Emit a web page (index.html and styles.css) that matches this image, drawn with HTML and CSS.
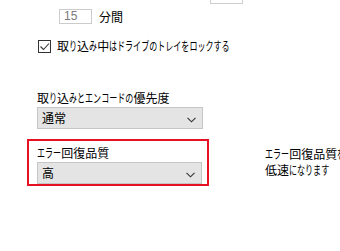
FILE: index.html
```html
<!DOCTYPE html>
<html lang="ja">
<head>
<meta charset="utf-8">
<link rel="stylesheet" href="styles.css">
</head>
<body>
<div class="page">
  <div class="top-strip"><div class="cut-box"></div></div>
  <div class="spin-row">
    <div class="spin">15</div>
    <span class="unit">分間</span>
  </div>
  <div class="check-row">
    <span class="checkbox">
      <svg width="11" height="11" viewBox="0 0 11 11"><path d="M1.5 5.5 L4.5 8.5 L10 2.5" fill="none" stroke="#333" stroke-width="1.1"/></svg>
    </span>
    <span class="text">取<span class="k n1">り</span>込<span class="k n1">み</span>中<span class="k n15">はドライブのトレイをロックする</span></span>
  </div>
  <div class="field">
    <div class="label">取<span class="k n1">り</span>込<span class="k n8">みとエンコードの</span>優先度</div>
    <div class="select"><span class="val">通常</span>
      <svg class="chev" width="9" height="6" viewBox="0 0 9 6"><path d="M0.5 0.8 L4.5 4.8 L8.5 0.8" fill="none" stroke="#333" stroke-width="1.1"/></svg>
    </div>
  </div>
  <div class="row">
    <div class="focus-box">
      <div class="label"><span class="k n3">エラー</span>回復品質</div>
      <div class="select"><span class="val">高</span>
        <svg class="chev" width="9" height="6" viewBox="0 0 9 6"><path d="M0.5 0.8 L4.5 4.8 L8.5 0.8" fill="none" stroke="#333" stroke-width="1.1"/></svg>
      </div>
    </div>
    <div class="desc">
      <div class="desc-line"><span class="k n3">エラー</span>回復品質<span class="k n1">を</span>高<span class="k n5">くすると、</span>取<span class="k n1">り</span>込<span class="k n2">みが</span></div>
      <div class="desc-line">低速<span class="k n5">になります</span></div>
    </div>
  </div>
</div>
</body>
</html>
```
FILE: styles.css
```css
html, body {
  margin: 0;
  padding: 0;
  background: #ffffff;
}
body {
  width: 340px;
  height: 251px;
  overflow: hidden;
  font-family: "Noto Sans CJK JP", "Noto Sans", sans-serif;
  font-size: 12px;
  color: #000;
}
.page {
  display: flex;
  flex-direction: column;
}
/* condensed kana runs (UI font has narrow kana) */
.k {
  --n: 1;
  --s: 0.67;
  display: inline-block;
  transform: scaleX(var(--s));
  transform-origin: 0 50%;
  margin-right: calc(var(--n) * 12px * (var(--s) - 1));
}
.n1 { --n: 1; }
.n2 { --n: 2; }
.n3 { --n: 3; }
.n5 { --n: 5; }
.n8 { --n: 8; }
.n15 { --n: 15; }
.top-strip {
  height: 4px;
}
.cut-box {
  margin-left: 210px;
  width: 31px;
  height: 3px;
  border: 1px solid #cfcfcf;
  border-top: none;
}
.spin-row {
  margin-top: 5px;
  padding-left: 59px;
  display: flex;
  align-items: center;
  gap: 7px;
  height: 15px;
}
.spin {
  box-sizing: border-box;
  width: 33px;
  height: 15px;
  border: 1px solid #cccccc;
  color: #7a7a7a;
  font-family: "Liberation Sans", sans-serif;
  font-size: 12px;
  line-height: 13px;
  padding-left: 4px;
}
.unit {
  line-height: 16px;
}
.check-row {
  margin-top: 15px;
  padding-left: 38px;
  display: flex;
  align-items: center;
  gap: 6px;
  height: 14px;
}
.checkbox {
  box-sizing: border-box;
  width: 13px;
  height: 13px;
  border: 1px solid #333;
  display: flex;
  align-items: center;
  justify-content: center;
}
.text {
  line-height: 16px;
  white-space: nowrap;
}
.field {
  margin-top: 37px;
  padding-left: 37px;
}
.label {
  line-height: 16px;
  height: 16px;
  white-space: nowrap;
}
.select {
  box-sizing: border-box;
  margin-top: 1px;
  width: 166px;
  height: 22px;
  background: #e4e4e4;
  border: 1px solid #c6c6c6;
  display: flex;
  align-items: center;
  justify-content: space-between;
  padding: 0 6px 0 4px;
}
.val {
  line-height: 16px;
}
.chev {
  margin-top: 3px;
}
.row {
  margin-top: 10px;
  display: flex;
  align-items: flex-start;
}
.focus-box {
  box-sizing: border-box;
  flex: none;
  margin-left: 27px;
  width: 182px;
  height: 47px;
  border: 2px solid #e81123;
  padding: 4px 0 0 8px;
}
.focus-box .select {
  width: 165px;
}
.desc {
  flex: none;
  margin-left: 56px;
  margin-top: 7px;
  white-space: nowrap;
}
.desc-line {
  line-height: 16px;
  height: 16px;
}
```
